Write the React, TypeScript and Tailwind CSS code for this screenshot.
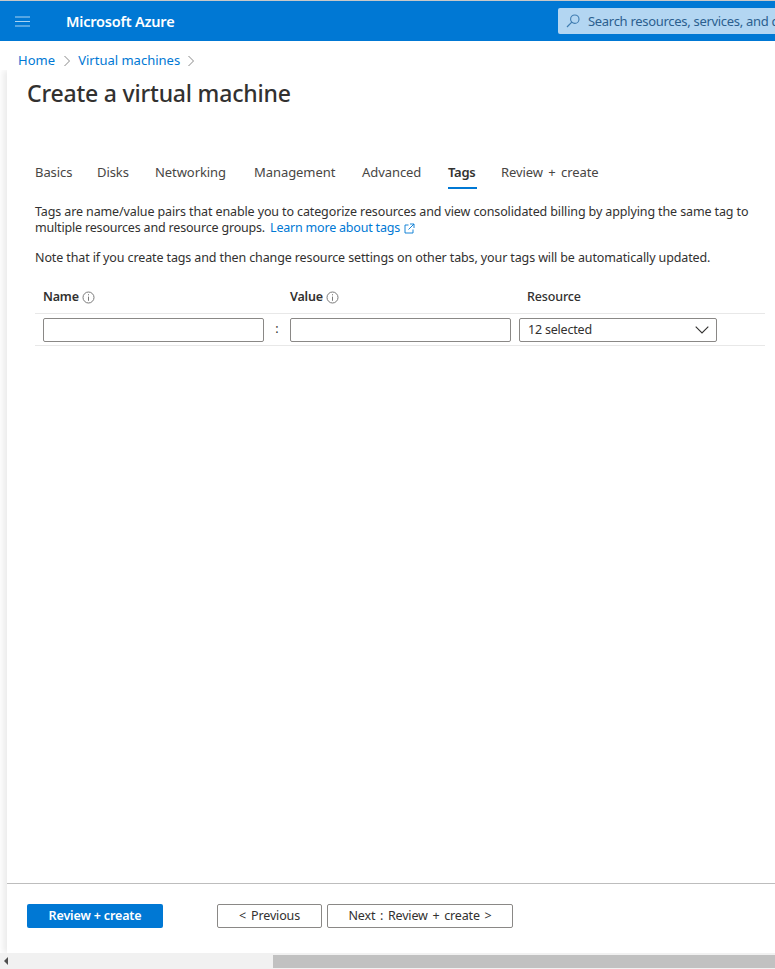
import React from "react";

function Info() {
  return (
    <svg width="13" height="13" viewBox="0 0 13 13" fill="none" className="shrink-0">
      <circle cx="6.5" cy="6.5" r="5.5" stroke="#7a7a7a" strokeWidth="1" />
      <path d="M6.5 5.6V9.8" stroke="#7a7a7a" strokeWidth="1" />
      <rect x="6" y="3.2" width="1" height="1.1" fill="#7a7a7a" />
    </svg>
  );
}

function Crumb() {
  return (
    <svg width="8" height="12" viewBox="0 0 8 12" fill="none" className="shrink-0">
      <path d="M1.5 1L6.5 6L1.5 11" stroke="#8a8a8a" strokeWidth="1" />
    </svg>
  );
}

const tabs = [
  { label: "Basics", w: "w-[62px]" },
  { label: "Disks", w: "w-[58px]" },
  { label: "Networking", w: "w-[99px]" },
  { label: "Management", w: "w-[108px]" },
  { label: "Advanced", w: "w-[86px]" },
];

export default function App() {
  return (
    <div className="w-[775px] h-[969px] overflow-hidden flex flex-col bg-white font-['Noto_Sans','Open_Sans',sans-serif] text-[13px] text-[#323130]">
      <div className="h-px bg-[#c8c8c8] shrink-0" />
      <header className="h-[40px] shrink-0 bg-[#0078d4] flex items-center text-white">
        <div className="w-[66px] pl-[15px] shrink-0">
          <svg width="15" height="11" viewBox="0 0 15 11" fill="none">
            <path d="M0 1H15M0 5.5H15M0 10H15" stroke="#a9d3f2" strokeWidth="1.2" />
          </svg>
        </div>
        <div className="w-[492px] shrink-0 pt-[2px] text-[14.5px] font-semibold tracking-[-0.2px] whitespace-nowrap">Microsoft Azure</div>
        <div className="flex-1 h-[26px] mr-[-20px] bg-[#b3d6f2] rounded-l-[2px] flex items-center pl-[8px] gap-[8px] overflow-hidden text-[#2b5f8f] whitespace-nowrap">
          <svg width="14" height="14" viewBox="0 0 14 14" fill="none" className="shrink-0">
            <circle cx="8.8" cy="5.2" r="4.2" stroke="#3f7cb0" strokeWidth="1.1" />
            <path d="M5.8 8.2L1 13" stroke="#3f7cb0" strokeWidth="1.2" />
          </svg>
          <span className="pt-[2px] tracking-[-0.3px]">Search resources, services, and docs (G+/)</span>
        </div>
      </header>
      <nav className="relative z-10 bg-white h-[29px] shrink-0 flex items-center pl-[18px] pt-[10px] text-[#0078d4] whitespace-nowrap">
        <span className="tracking-[0.05px]">Home</span>
        <span className="mx-[8px] flex"><Crumb /></span>
        <span className="-ml-[1px]">Virtual machines</span>
        <span className="ml-[7px] flex"><Crumb /></span>
      </nav>
      <main className="flex-1 min-h-0 ml-[7px] flex flex-col shadow-[-4px_0_6px_rgba(0,0,0,0.08)]">
        <div className="flex-1 min-h-0 flex flex-col">
          <h1 className="pl-[20px] h-[44px] pt-[2px] flex items-center text-[23px] font-medium tracking-[-0.2px] text-[#323130] whitespace-nowrap">Create a virtual machine</h1>
          <div className="mt-[47px] pl-[28px] h-[30px] flex items-start whitespace-nowrap tracking-[-0.07px] text-[#484644]">
            {tabs.map((t) => (
              <div key={t.label} className={`${t.w} shrink-0 h-[25px] pt-[2px]`}>{t.label}</div>
            ))}
            <div className="w-[29px] h-[28px] pt-[2px] mr-[24px] shrink-0 border-b-2 border-[#0078d4] font-semibold tracking-[-0.25px] text-[#323130]">Tags</div>
            <div className="pt-[2px] [word-spacing:2px]">Review + create</div>
          </div>
          <div className="pl-[28px] pr-[20px] mt-[13px] leading-[16px] text-[12.5px] tracking-[-0.12px]">
            <p className="whitespace-nowrap">Tags are name/value pairs that enable you to categorize resources and view consolidated billing by applying the same tag to</p>
            <p className="flex items-center gap-[4px] whitespace-nowrap">
              <span className="tracking-[-0.18px]">multiple resources and resource groups.</span>
              <span className="text-[#0078d4] tracking-[-0.2px] ml-[1px]">Learn more about tags</span>
              <svg width="11" height="11" viewBox="0 0 11 11" fill="none" className="shrink-0">
                <path d="M4.5 2H1V10H9V6.5M6 1H10V5M10 1L4.5 6.5" stroke="#0078d4" strokeWidth="0.9" />
              </svg>
            </p>
            <p className="mt-[14px] whitespace-nowrap">Note that if you create tags and then change resource settings on other tabs, your tags will be automatically updated.</p>
          </div>
          <div className="ml-[28px] w-[730px] mt-[16px] text-[12.5px]">
            <div className="h-[32px] flex items-center pl-[8px] border-b border-[#e8e8e8] text-[#323130]">
              <div className="w-[247px] shrink-0 flex items-center gap-[3px] font-semibold tracking-[-0.2px]">Name <Info /></div>
              <div className="w-[237px] shrink-0 flex items-center gap-[3px] font-semibold tracking-[-0.2px]">Value <Info /></div>
              <div className="font-medium tracking-[-0.15px]">Resource</div>
            </div>
            <div className="h-[32px] flex items-center pl-[8px] border-b border-[#e8e8e8]">
              <div className="w-[221px] h-[24px] shrink-0 border border-[#8a8886] rounded-[2px]" />
              <div className="w-[26px] shrink-0 text-center">:</div>
              <div className="w-[221px] h-[24px] shrink-0 border border-[#8a8886] rounded-[2px]" />
              <div className="w-[198px] h-[24px] ml-[8px] shrink-0 border border-[#8a8886] rounded-[2px] flex items-center justify-between pl-[8px] pr-[7px] tracking-[-0.2px]">
                <span className="pt-[2px]">12 selected</span>
                <svg width="14" height="8" viewBox="0 0 14 8" fill="none">
                  <path d="M0.7 0.7L7 7L13.3 0.7" stroke="#323130" strokeWidth="1.1" />
                </svg>
              </div>
            </div>
          </div>
        </div>
        <footer className="h-[70px] shrink-0 border-t border-[#bdbdbd] flex items-start pt-[20px] pl-[20px] text-[12.5px] whitespace-nowrap tracking-[-0.15px]">
          <button className="w-[136px] h-[24px] bg-[#0078d4] text-white font-semibold rounded-[2px]">Review + create</button>
          <button className="w-[105px] h-[24px] ml-[54px] border border-[#8a8886] rounded-[2px] [word-spacing:2px]">&lt; Previous</button>
          <button className="w-[186px] h-[24px] ml-[5px] border border-[#8a8886] rounded-[2px] [word-spacing:1.6px]">Next : Review + create &gt;</button>
        </footer>
      </main>
      <div className="relative z-10 h-[16px] shrink-0 bg-[#f1f1f1] flex items-center pl-[3px]">
        <svg width="6" height="8" viewBox="0 0 6 8" className="shrink-0"><path d="M5 0V8L1 4Z" fill="#505050" /></svg>
        <div className="ml-[264px] flex-1 h-[13px] bg-[#c1c1c1] mt-[1px]" />
      </div>
    </div>
  );
}
